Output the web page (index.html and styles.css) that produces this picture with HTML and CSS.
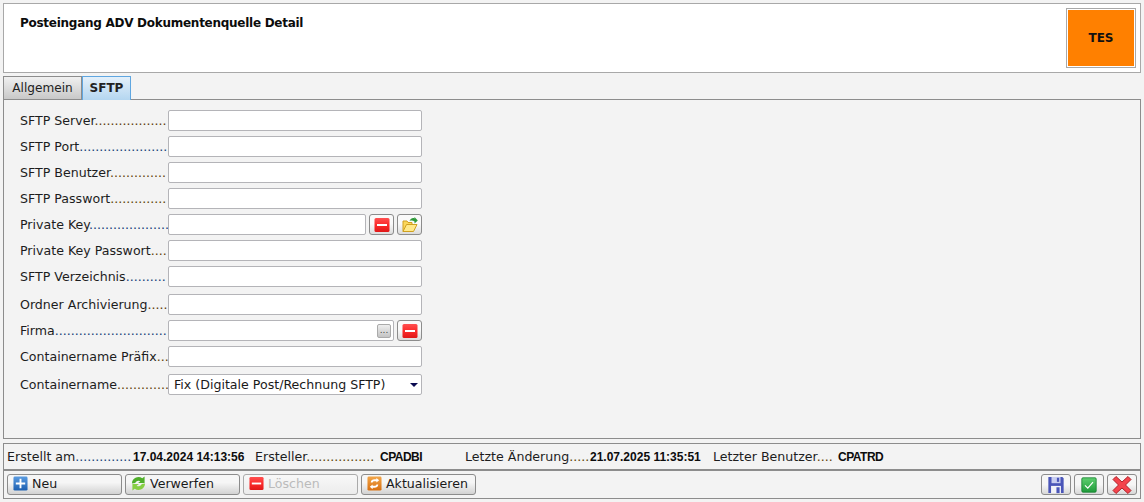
FILE: index.html
```html
<!DOCTYPE html>
<html lang="de">
<head>
<meta charset="utf-8">
<title>Posteingang ADV Dokumentenquelle Detail</title>
<link rel="stylesheet" href="styles.css">
</head>
<body>
<svg class="defs" width="0" height="0" aria-hidden="true">
  <defs>
    <linearGradient id="red" x1="0" y1="0" x2="0" y2="1"><stop offset="0" stop-color="#ff5050"/><stop offset=".5" stop-color="#fb2a2a"/><stop offset="1" stop-color="#e01818"/></linearGradient>
    <linearGradient id="blue" x1="0" y1="0" x2="0" y2="1"><stop offset="0" stop-color="#5a9be0"/><stop offset="1" stop-color="#1d5fb0"/></linearGradient>
    <linearGradient id="orange" x1="0" y1="0" x2="0" y2="1"><stop offset="0" stop-color="#f2a64a"/><stop offset="1" stop-color="#d86f10"/></linearGradient>
    <linearGradient id="green" x1="0" y1="0" x2="0" y2="1"><stop offset="0" stop-color="#5fd070"/><stop offset="1" stop-color="#1f9a3a"/></linearGradient>
    <symbol id="i-minus" viewBox="0 0 16 16"><rect x=".5" y="1" width="15" height="14" rx="1.5" fill="url(#red)"/><rect x="3" y="7" width="10" height="2" fill="#fff"/></symbol>
  </defs>
</svg>
<div class="page">
  <header class="head">
    <h1 class="title">Posteingang ADV Dokumentenquelle Detail</h1>
    <div class="badge"><span class="badge-in">TES</span></div>
  </header>

  <nav class="tabs">
    <span class="tab">Allgemein</span>
    <span class="tab tab-on">SFTP</span>
  </nav>

  <main class="panel">
    <div class="row"><label class="lab">SFTP Server<span class="d-o">..................</span></label><span class="field"></span></div>
    <div class="row"><label class="lab">SFTP Port<span class="d-b">......................</span></label><span class="field"></span></div>
    <div class="row"><label class="lab">SFTP Benutzer<span class="d-o">..............</span></label><span class="field"></span></div>
    <div class="row"><label class="lab">SFTP Passwort<span class="d-o">..............</span></label><span class="field"></span></div>
    <div class="row"><label class="lab">Private Key<span class="d-b">....................</span></label><span class="field field-s"></span>
      <button class="mini"><svg class="i16"><use href="#i-minus"/></svg></button>
      <button class="mini"><svg class="i16" viewBox="0 0 16 16"><path d="M1 14.500V4H5L6 5.500H10V8" fill="#fbd75a" stroke="#cfa020"/><path d="M1 14.500L4.500 7.500H15L11.500 14.500Z" fill="#ffe98a" stroke="#cfa020"/><path d="M7.500 4C8.500 1.500 11 .5 12.500 1.500V0L15.800 3.500L12.500 6.500V4.500C11 3.500 9.500 3.300 7.500 4Z" fill="#2f9a3a"/></svg></button>
    </div>
    <div class="row"><label class="lab">Private Key Passwort<span class="d-o">....</span></label><span class="field"></span></div>
    <div class="row row-gap"><label class="lab">SFTP Verzeichnis<span class="d-b">..........</span></label><span class="field"></span></div>
    <div class="row"><label class="lab">Ordner Archivierung<span class="d-o">.....</span></label><span class="field"></span></div>
    <div class="row"><label class="lab">Firma<span class="d-b">............................</span></label><span class="field field-m"><span class="dots">...</span></span>
      <button class="mini"><svg class="i16"><use href="#i-minus"/></svg></button>
    </div>
    <div class="row row-gap"><label class="lab">Containername Präfix<span class="d-o">...</span></label><span class="field"></span></div>
    <div class="row"><label class="lab">Containername<span class="d-o">.............</span></label><span class="field field-sel"><span>Fix (Digitale Post/Rechnung SFTP)</span><i class="caret"></i></span></div>
  </main>

  <section class="status">
    <span class="st st-a">Erstellt am<span class="d-b">..............</span></span><b class="val val-a">17.04.2024 14:13:56</b>
    <span class="st st-b">Ersteller<span class="d-o">.................</span></span><b class="val val-b val-n">CPADBI</b>
    <span class="st st-c">Letzte Änderung<span class="d-o">.....</span></span><b class="val val-c">21.07.2025 11:35:51</b>
    <span class="st st-d">Letzter Benutzer<span class="d-o">....</span></span><b class="val val-n">CPATRD</b>
  </section>

  <footer class="bar">
    <button class="btn"><svg class="i15" viewBox="0 0 16 16"><rect x=".5" y=".5" width="15" height="15" rx="1.500" fill="url(#blue)"/><path d="M7 3H9V7H13V9H9V13H7V9H3V7H7Z" fill="#fff"/></svg>Neu</button>
    <button class="btn"><svg class="i15" viewBox="0 0 16 16"><path d="M1 8A7 7 0 0 1 12 2.500L14.500 .5V7.500H7.500L10 5.500A3.800 3.800 0 0 0 4.500 7.500Z" fill="#4fae2a"/><path d="M15 8A7 7 0 0 1 4 13.500L1.500 15.500V8.500H8.500L6 10.500A3.800 3.800 0 0 0 11.500 8.500Z" fill="#86cf44"/></svg>Verwerfen</button>
    <button class="btn btn-off"><svg class="i15"><use href="#i-minus"/></svg>Löschen</button>
    <button class="btn"><svg class="i15" viewBox="0 0 16 16"><rect x=".5" y=".5" width="15" height="15" rx="1.500" fill="url(#orange)"/><path d="M4 7C4 4.500 6 3.500 8 3.500H10V2L13 4.500L10 7V5.500H8C7 5.500 6 6 6 7ZM12 9C12 11.500 10 12.500 8 12.500H6V14L3 11.500L6 9V10.500H8C9 10.500 10 10 10 9Z" fill="#fff"/></svg>Aktualisieren</button>
    <div class="bar-right">
      <button class="tool"><svg class="i18" viewBox="0 0 20 20"><path d="M1.500 1H17L18.500 2.500V19H1.500Z" fill="#4a55b8"/><rect x="5" y="1" width="10" height="7" fill="#c8cdf0"/><rect x="11" y="2" width="2.500" height="4.500" fill="#4a55b8"/><rect x="4.500" y="11" width="11" height="8" fill="#f2f2f8"/><rect x="10.500" y="12.500" width="3.500" height="6.500" fill="#4a55b8"/></svg></button>
      <button class="tool"><svg class="i16" viewBox="0 0 20 20"><rect x="1" y="1" width="18" height="18" rx="1.500" fill="url(#green)" stroke="#158030"/><path d="M5 10.500L8.500 14L15 6.500" fill="none" stroke="#fff" stroke-width="1.500"/></svg></button>
      <button class="tool"><svg class="i20" viewBox="0 0 20 20"><path d="M4 1.500L10 7L16 1.500L19 4.500L13.500 10L19 15.500L16 18.500L10 13L4 18.500L1 15.500L6.500 10L1 4.500Z" fill="#f4444c" stroke="#b02028"/></svg></button>
    </div>
  </footer>
</div>
</body>
</html>
```
FILE: styles.css
```css
* { box-sizing: border-box; }
html, body { margin: 0; padding: 0; height: 100%; }
body { background: #f3f3f3; color: #111; font-family: "DejaVu Sans", sans-serif; font-size: 12.6px; overflow: hidden; }
.defs { position: absolute; }
.page { width: 1144px; height: 502px; padding: 3px; display: flex; flex-direction: column; }

.head { height: 70px; flex: none; background: #fff; border: 1px solid #a8a8a8; display: flex; justify-content: space-between; padding: 4px 4px 4px 16px; }
.title { margin: 8px 0 0; font-size: 12px; letter-spacing: -.27px; font-weight: bold; line-height: 15px; color: #0c0c0c; }
.badge { width: 70px; height: 60px; border: 1px solid #a8a8a8; padding: 1px; background: #fff; }
.badge-in { display: flex; width: 100%; height: 100%; align-items: center; justify-content: center; background: #ff8000; font-size: 12px; font-weight: bold; color: #111; }

.tabs { display: flex; flex: none; margin-top: 3px; height: 23px; position: relative; z-index: 1; }
.tab { width: 79px; height: 23px; border: 1px solid #8c8c8c; border-bottom: 0; background: linear-gradient(#f0f0f0, #c8c8c8); text-align: center; line-height: 23px; color: #222; font-size: 12.1px; }
.tab-on { width: 49px; height: 24px; border-color: #5fa6e0; background: linear-gradient(#e4f0fa, #b4d6f0); font-weight: bold; font-size: 12px; line-height: 22px; }

.panel { flex: 1; min-height: 0; border: 1px solid #8c8c8c; padding: 10px 0 0 16px; display: flex; flex-direction: column; gap: 5px; background: #f3f3f3; }
.row { display: flex; align-items: center; height: 21px; flex: none; }
.row-gap { margin-bottom: 2px; }
.lab { width: 148px; height: 21px; flex: none; padding-top: 1px; white-space: nowrap; line-height: 20px; color: #1d1d1d; }
.d-o { color: #5e3c06; }
.d-b { color: #123a78; }

.field { width: 254px; height: 21px; background: #fff; border: 1px solid #b4b4b8; border-radius: 2px; display: flex; align-items: center; justify-content: space-between; padding: 0 3px 0 5px; }
.field-s { width: 198px; }
.field-m { width: 226px; padding-right: 2px; justify-content: flex-end; }
.field-sel { color: #1a1a1a; }
.dots { width: 14px; height: 14px; border: 1px solid #aaa; border-radius: 2px; background: linear-gradient(#eee, #c4c4c4); font-size: 9px; line-height: 11px; text-align: center; color: #444; }
.caret { width: 0; height: 0; border: 4px solid transparent; border-top: 4px solid #0a0a50; border-bottom: 0; }

.mini { width: 25px; height: 21px; margin-left: 3px; padding: 0; border: 1px solid #8c8c8c; border-radius: 3px; background: linear-gradient(#fafafa 45%, #dcdcdc); display: flex; align-items: center; justify-content: center; }
.i15 { width: 15px; height: 15px; flex: none; }
.i16 { width: 16px; height: 16px; flex: none; }
.i18 { width: 18px; height: 18px; flex: none; }
.i20 { width: 20px; height: 20px; flex: none; }

.status { flex: none; margin-top: 4px; height: 28px; border: 1px solid #8c8c8c; border-bottom-width: 2px; display: flex; align-items: center; padding: 0 0 0 3px; white-space: nowrap; color: #1d1d1d; }
.st { flex: none; }
.st-a { width: 126px; }
.st-b { width: 125px; }
.st-c { width: 125px; }
.st-d { width: 125px; }
.val { flex: none; font-family: "Liberation Sans", sans-serif; font-size: 12px; color: #0c0c0c; }
.val-n { letter-spacing: -.5px; }
.val-a { width: 122px; }
.val-b { width: 85px; }
.val-c { width: 123px; }

.bar { flex: none; height: 28px; border: 1px solid #8c8c8c; border-top: 0; display: flex; align-items: center; gap: 3px; padding: 3px; }
.btn { width: 115px; height: 21px; padding: 0 0 3px 5px; border: 1px solid #8c8c8c; border-radius: 3px; background: linear-gradient(#f6f6f6 40%, #d2d2d2); display: flex; align-items: center; gap: 4px; font: 12.6px "DejaVu Sans", sans-serif; color: #1a1a1a; }
.btn-off { color: #bbb; background: linear-gradient(#f8f8f8, #ececec); border-color: #aaa; }
.bar-right { margin-left: auto; display: flex; gap: 3px; }
.tool { width: 30px; height: 21px; padding: 0; border: 1px solid #8c8c8c; border-radius: 3px; background: linear-gradient(#f6f6f6 50%, #d8d8d8); display: flex; align-items: center; justify-content: center; }
```
